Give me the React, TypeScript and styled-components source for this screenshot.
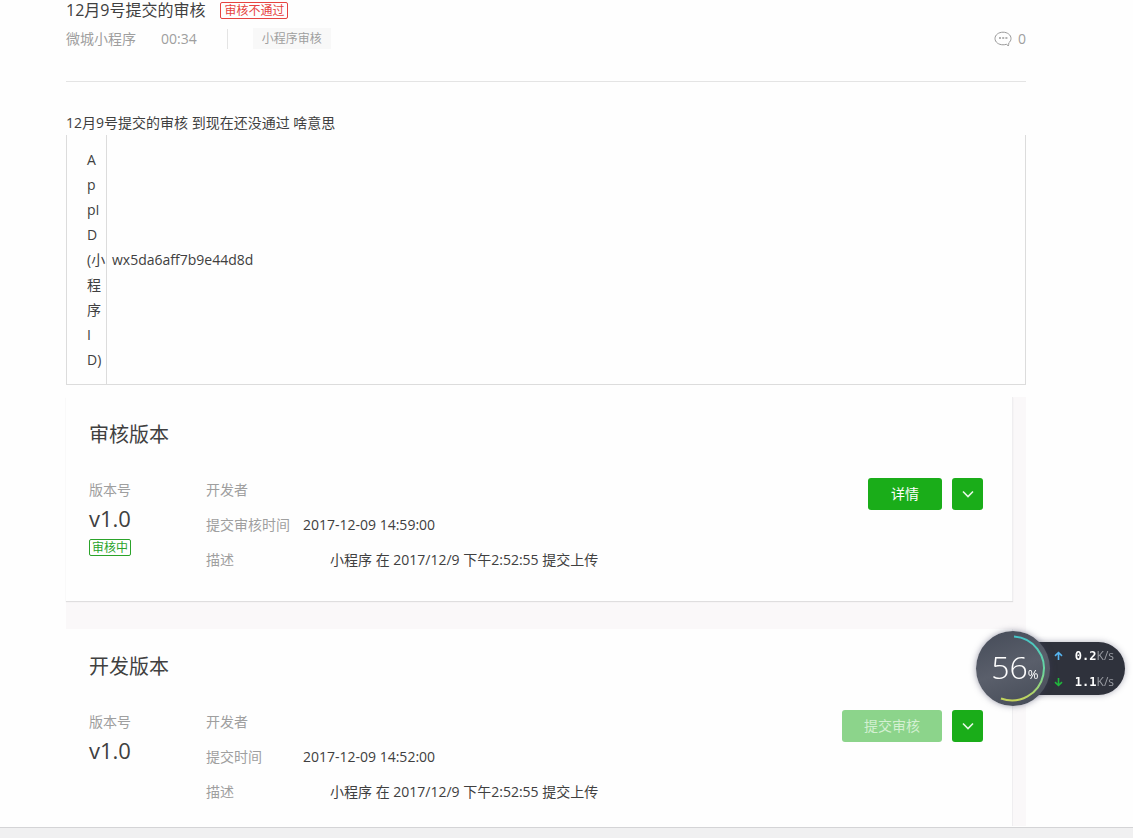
import React from 'react';
import styled, { createGlobalStyle } from 'styled-components';

const sans = `"Open Sans", "Noto Sans CJK SC", sans-serif`;

const GlobalStyle = createGlobalStyle`
  *, *::before, *::after { box-sizing: border-box; }
  body {
    margin: 0;
    background: #fefefe;
    color: #404040;
    font-family: ${sans};
    font-size: 14px;
    line-height: 20px;
  }
  h1, h2, p, dl, dd { margin: 0; font-weight: 400; }
  button { font: inherit; }
`;

const Page = styled.div`
  min-height: 100vh;
  display: flex;
  flex-direction: column;
`;

const Article = styled.main`
  flex: 1;
  padding: 0 107px 0 66px;
`;

const Header = styled.header`
  padding-bottom: 32px;
  border-bottom: 1px solid #e4e4e4;
`;

const TitleRow = styled.div`
  display: flex;
  align-items: center;
  gap: 15px;
`;

const Title = styled.h1`
  font-size: 16px;
  line-height: 20px;
`;

const StatusTag = styled.span<{ $color: string; $pad: number }>`
  display: inline-block;
  padding: 0 ${(p) => p.$pad}px;
  border: 1px solid ${(p) => p.$color};
  border-radius: 2px;
  color: ${(p) => p.$color};
  font-size: 12px;
  line-height: 15px;
`;

const Meta = styled.div`
  display: flex;
  align-items: center;
  margin-top: 8px;
  color: #9f9f9f;
`;

const Time = styled.time`
  margin-left: 25px;
  padding-right: 30px;
  border-right: 1px solid #e4e4e4;
`;

const Category = styled.a`
  margin-left: 25px;
  padding: 0 9px;
  background: #f8f8f8;
  color: #9f9f9f;
  font-size: 12px;
  line-height: 21px;
  text-decoration: none;
`;

const Comments = styled.span`
  display: flex;
  align-items: center;
  gap: 6px;
  margin-left: auto;
`;

const Post = styled.section`
  padding-top: 28px;
  line-height: 25px;
`;

const AppTable = styled.table`
  width: 100%;
  border-collapse: separate;
  border-spacing: 0;
  border: 1px solid #dcdcdc;
  border-top: 0;
  text-align: left;
`;

const KeyCell = styled.th`
  width: 40px;
  max-width: 40px;
  padding: 12px 0 12px 20px;
  border-right: 1px solid #dcdcdc;
  font-weight: 400;
  white-space: nowrap;
`;

const ValueCell = styled.td`
  padding: 12px 5px;
`;

const Versions = styled.section`
  display: flex;
  flex-direction: column;
  gap: 28px;
  margin-top: 12px;
  padding-right: 13px;
  background: #faf8f9;
`;

const Card = styled.article<{ $last?: boolean }>`
  padding: 23px 29px ${(p) => (p.$last ? 17 : 24)}px 23px;
  background: #fefefe;
  border-right: 1px solid #efeef0;
  box-shadow: ${(p) => (p.$last ? 'none' : '0 1px 1px #dfdedf')};
`;

const CardTitle = styled.h2`
  margin-bottom: 22px;
  font-size: 20px;
  line-height: 30px;
`;

const CardBody = styled.div`
  display: flex;
  align-items: flex-start;
`;

const VersionColumn = styled.div`
  width: 117px;
  line-height: 35px;
`;

const Label = styled.p`
  color: #9f9f9f;
`;

const VersionNumber = styled.p`
  font-size: 22px;
  line-height: 23px;
`;

const VersionTag = styled.div`
  display: flex;
  margin-top: 9px;
`;

const Details = styled.dl`
  flex: 1;
  display: grid;
  grid-template-columns: 97px 1fr;
  grid-auto-rows: 35px;
  line-height: 35px;
`;

const Term = styled.dt`
  color: #9f9f9f;
`;

const Description = styled.dd<{ $indent?: boolean }>`
  padding-left: ${(p) => (p.$indent ? 27 : 0)}px;
`;

const Actions = styled.div`
  display: flex;
  gap: 10px;
  padding-top: 6px;
`;

const Button = styled.button`
  display: flex;
  align-items: center;
  justify-content: center;
  height: 32px;
  padding: 0 23px;
  border: 0;
  border-radius: 3px;
  background: #1aad19;
  color: #fff;
  &:disabled {
    padding: 0 22px;
    background: #8cd48b;
    color: #d3f0d2;
  }
`;

const IconButton = styled(Button)`
  width: 31px;
  padding: 0;
`;

const BottomBar = styled.footer`
  height: 11px;
  border-top: 1px solid #d4d4d6;
  background: #f0f0f1;
`;

const Monitor = styled.aside`
  position: fixed;
  top: 631px;
  right: 8px;
  display: flex;
  align-items: center;
  color: #fff;
`;

const Gauge = styled.div`
  position: relative;
  z-index: 1;
  width: 74px;
  height: 75px;
  border-radius: 50%;
  background: linear-gradient(160deg, #454b58, #5a5f6b 50%, #444a56);
  box-shadow: 0 0 6px rgba(60, 60, 90, 0.5);
`;

const GaugeRing = styled.svg`
  position: absolute;
  inset: 0;
`;

const GaugeValue = styled.div`
  display: flex;
  align-items: baseline;
  justify-content: center;
  padding-left: 4px;
  font-size: 32px;
  font-weight: 300;
  line-height: 72px;
`;

const Percent = styled.span`
  font-size: 13px;
  font-weight: 400;
`;

const Speeds = styled.div`
  display: grid;
  gap: 6px;
  margin-left: -37px;
  padding: 4px 11px 3px 41px;
  border-radius: 0 27px 27px 0;
  background: #2f323c;
  box-shadow: 0 0 6px rgba(60, 60, 90, 0.4);
`;

const Speed = styled.div`
  display: flex;
  align-items: center;
`;

const SpeedValue = styled.span`
  margin-left: 12px;
  font: 700 12px/20px "DejaVu Sans Mono", monospace;
`;

const SpeedUnit = styled.span`
  color: #9a9ca3;
  font-size: 12px;
`;

const CommentIcon = () => (
  <svg width="18" height="16" viewBox="0 0 18 16" fill="none" stroke="#9a9a9a" aria-hidden="true">
    <path d="M14.2 15c-.3-.9-1.1-1.600-1.900-1.700-1 .35-2.100.5-3.300.5C4.600 13.800 1 11.100 1 7.500S4.600 1.200 9 1.200s8 2.700 8 6.300c0 1.800-.8 3.200-2.200 4.300 0 1.200-.1 2.100-.6 3.200Z" />
    <path d="M5 7h2M8.200 7h2M11.400 7h2" strokeWidth="1.500" />
  </svg>
);

const Chevron = () => (
  <svg width="12" height="8" viewBox="0 0 12 8" fill="none" stroke="#e6f8e6" strokeWidth="1.600" aria-hidden="true">
    <path d="M1 1.500 6 6.500 11 1.500" />
  </svg>
);

const Arrow = ({ up }: { up?: boolean }) => (
  <svg width="9" height="10" viewBox="0 0 9 10" fill="none" stroke={up ? '#55b4f0' : '#20b83c'} strokeWidth="1.600" aria-hidden="true">
    <path d={up ? 'M4.500 9V1.500M1 4.800 4.500 1.500 8 4.800' : 'M4.500 1V8.500M1 5.200 4.500 8.500 8 5.200'} />
  </svg>
);

type Version = {
  title: string;
  tag?: string;
  timeLabel: string;
  time: string;
  action: string;
  disabled?: boolean;
};

const versions: Version[] = [
  { title: '审核版本', tag: '审核中', timeLabel: '提交审核时间', time: '2017-12-09 14:59:00', action: '详情' },
  { title: '开发版本', timeLabel: '提交时间', time: '2017-12-09 14:52:00', action: '提交审核', disabled: true },
];

const keyLines = ['A', 'p', 'pI', 'D', '(小', '程', '序', 'I', 'D)'];

export default function App() {
  return (
    <Page lang="zh-CN">
      <GlobalStyle />
      <Article>
        <Header>
          <TitleRow>
            <Title>12月9号提交的审核</Title>
            <StatusTag $color="#e64340" $pad={3}>审核不通过</StatusTag>
          </TitleRow>
          <Meta>
            <span>微城小程序</span>
            <Time>00:34</Time>
            <Category href="#review">小程序审核</Category>
            <Comments>
              <CommentIcon />
              0
            </Comments>
          </Meta>
        </Header>
        <Post>
          <p>12月9号提交的审核 到现在还没通过 啥意思</p>
          <AppTable>
            <tbody>
              <tr>
                <KeyCell scope="row">
                  {keyLines.map((line, i) => (
                    <React.Fragment key={i}>
                      {i > 0 && <br />}
                      {line}
                    </React.Fragment>
                  ))}
                </KeyCell>
                <ValueCell>wx5da6aff7b9e44d8d</ValueCell>
              </tr>
            </tbody>
          </AppTable>
        </Post>
        <Versions>
          {versions.map((v, i) => (
            <Card key={v.title} $last={i === versions.length - 1}>
              <CardTitle>{v.title}</CardTitle>
              <CardBody>
                <VersionColumn>
                  <Label>版本号</Label>
                  <VersionNumber>v1.0</VersionNumber>
                  {v.tag && (
                    <VersionTag>
                      <StatusTag $color="#2ba32a" $pad={2}>{v.tag}</StatusTag>
                    </VersionTag>
                  )}
                </VersionColumn>
                <Details>
                  <Term>开发者</Term>
                  <Description />
                  <Term>{v.timeLabel}</Term>
                  <Description>{v.time}</Description>
                  <Term>描述</Term>
                  <Description $indent>小程序 在 2017/12/9 下午2:52:55 提交上传</Description>
                </Details>
                <Actions>
                  <Button type="button" disabled={v.disabled}>{v.action}</Button>
                  <IconButton type="button" aria-label="更多操作">
                    <Chevron />
                  </IconButton>
                </Actions>
              </CardBody>
            </Card>
          ))}
        </Versions>
      </Article>
      <BottomBar />
      <Monitor>
        <Gauge>
          <GaugeRing width="74" height="75" viewBox="0 0 74 75" fill="none" aria-hidden="true">
            <defs>
              <linearGradient id="ring" x1="0" y1="0" x2="0" y2="1">
                <stop offset="0" stopColor="#45c5c8" />
                <stop offset="0.550" stopColor="#6bd69c" />
                <stop offset="1" stopColor="#c5d35a" />
              </linearGradient>
            </defs>
            <path d="M38 5.500A32 32 0 1 1 25 67.500" stroke="url(#ring)" strokeWidth="2" />
          </GaugeRing>
          <GaugeValue>
            56<Percent>%</Percent>
          </GaugeValue>
        </Gauge>
        <Speeds>
          <Speed>
            <Arrow up />
            <SpeedValue>0.2</SpeedValue>
            <SpeedUnit>K/s</SpeedUnit>
          </Speed>
          <Speed>
            <Arrow />
            <SpeedValue>1.1</SpeedValue>
            <SpeedUnit>K/s</SpeedUnit>
          </Speed>
        </Speeds>
      </Monitor>
    </Page>
  );
}
